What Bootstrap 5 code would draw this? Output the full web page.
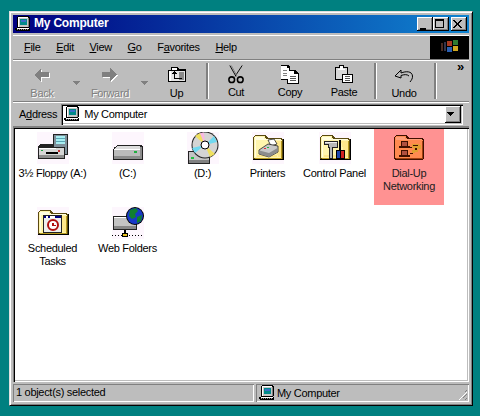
<!DOCTYPE html>
<html lang="en">
<head>
<meta charset="UTF-8">
<title>My Computer</title>
<link href="https://cdn.jsdelivr.net/npm/bootstrap@5.3.0/dist/css/bootstrap.min.css" rel="stylesheet">
<style>
html, body { height: 100%; }
body { background: #008080; font: 11px/13px "Liberation Sans", Arial, sans-serif; letter-spacing: -.3px; color: #000; padding: 11px 7px 0 9px; overflow: hidden; }
.win { width: 464px; height: 395px; background: #bdbdbd; border: 1px solid #000; border-top-color: #dfdfdf; border-left-color: #dfdfdf; box-shadow: inset 1px 1px #fff, inset -1px -1px #808080; padding: 3px; }
.titlebar { height: 18px; margin-bottom: 2px; background: linear-gradient(90deg, #000080, #1084d0); color: #fff; font-weight: 700; font-size: 12px; letter-spacing: -.2px; padding: 0 2px 0 2px; }
.titlebar svg { margin-right: 3px; }
.capbtn { width: 16px; height: 14px; background: #bdbdbd; box-shadow: inset -1px -1px #000, inset 1px 1px #fff, inset -2px -2px #808080; }
.capgap { margin-left: 2px; }
.band { border-top: 1px solid #fff; border-bottom: 1px solid #808080; }
.menubar { height: 25px; padding-left: 11px; gap: 15.6px; }
.flagbox { width: 39px; height: 23px; background: #000; }
.toolbar { height: 42px; position: relative; }
.tbtn { height: 40px; color: #000; padding-top: 6px; }
.tbtn svg { display: block; }
.tbtn .lbl { margin-top: 4px; }
.tbtn.tall { margin-top: -2px; }
.tbtn.tall .lbl { margin-top: 2px; }
.tbtn.off { color: #808080; text-shadow: 1px 1px 0 #fff; }
.w-back { width: 56px; margin-left: 1px; }
.w-drop { width: 12px; padding-top: 20px; }
.w-fwd { width: 56px; }
.w-up { width: 53px; }
.w-std { width: 54px; }
.sep { width: 2px; height: 36px; margin: 2px 1px 0 3px; background: #808080; box-shadow: 1px 0 #fff; }
.w-chev { font-weight: 700; font-size: 13px; line-height: 10px; padding: 1px 0 0 20px; }
.addrbar { height: 25px; padding: 1px 6px 1px 6px; }
.addrfield { flex: 1; height: 21px; margin-left: 4px; background: #fff; box-shadow: inset 1px 1px #808080, inset 2px 2px #000, inset -1px -1px #fff, inset -2px -2px #bdbdbd; padding: 2px 2px 2px 3px; }
.addrfield svg { margin-right: 4px; }
.ddbtn { width: 16px; height: 17px; background: #bdbdbd; box-shadow: inset -1px -1px #000, inset 1px 1px #fff, inset -2px -2px #808080; }
.pane { height: 256px; background: #fff; box-shadow: inset 1px 1px #808080, inset 2px 2px #000, inset -1px -1px #fff, inset -2px -2px #bdbdbd; padding: 2px 0 0 2px; }
.icongrid { width: 440px; }
.itm { height: 75px; padding-top: 3px; text-align: center; }
.itm svg { display: block; margin: 0 auto 3px; background: #fdf6fd; }
.c1 { width: 75px; }
.c2 { width: 75px; }
.c3 { width: 75px; }
.c4 { width: 55px; }
.c5 { width: 79px; }
.c6 { width: 70px; }
.itm.sel { background: #ff9292; color: #202020; height: 76px; margin-bottom: -1px; }
.itm.sel svg { background: #ff9292; }
.brk { flex-basis: 100%; height: 0; }
.statusbar { height: 18px; margin-top: 2px; gap: 2px; }
.cell { height: 18px; box-shadow: inset 1px 1px #808080, inset -1px -1px #fff; padding: 2px 3px; }
.cell1 { width: 241px; }
.cell2 { flex: 1; position: relative; padding-left: 3px; }
.cell2 svg.pc { margin-right: 2px; }
.grip { position: absolute; right: 1px; bottom: 1px; }
</style>
</head>
<body>
<svg width="0" height="0" class="position-absolute">
  <defs>
    <symbol id="pc" viewBox="0 0 16 16" shape-rendering="crispEdges">
      <path fill="#000" d="M3 0h11v1h1v10h-1v1h1v3H1v-1H0v-2h2V1h1z"/>
      <path fill="#c6c6c6" d="M3 1h10v10H3z"/>
      <path fill="#fff" d="M3 1h10v1H4v9H3z"/>
      <path fill="#008a8a" d="M5 3h7v6H5z"/>
      <path fill="#3a6ec8" d="M6 4h5v2H6z"/>
      <path fill="#808080" d="M13 2h1v9h-1z"/>
      <path fill="#fff" d="M2 12h12v1H2z"/>
      <path fill="#8a8a8a" d="M2 13h1v1H2zM4 13h1v1H4zM6 13h1v1H6zM8 13h1v1H8zM10 13h1v1h-1zM12 13h1v1h-1z"/>
    </symbol>
    <symbol id="folder" viewBox="0 0 32 32" shape-rendering="crispEdges">
      <path fill="#5a4a10" d="M3 3h11v1h1v1h1v1h14v1h1v20h-1v1H2v-1H1V5h1V4h1z"/>
      <path fill="#000" d="M1 27h31v1H1zM31 7h1v20h-1z"/>
      <path fill="#fff5ad" d="M3 4h10v2h1v1h15v1h1v18H2V5h1z"/>
      <path fill="#fffde0" d="M3 5h9v2H3zM3 7h26v1H3zM3 8h1v17H3z"/>
      <path fill="#b89a20" d="M29 9h1v18H3v-1h26z"/>
      <path fill="#ffe88c" d="M22 9h7v16h-3zM5 23h20v2H5z"/>
    </symbol>
  </defs>
</svg>
<div class="win d-flex flex-column">
  <div class="titlebar d-flex align-items-center">
    <svg width="16" height="16"><use href="#pc"/></svg>
    <span class="flex-grow-1">My Computer</span>
    <div class="capbtn d-flex align-items-end justify-content-center"><svg width="8" height="6" shape-rendering="crispEdges"><path d="M1 1h6v2H1z" transform="translate(-1 2)"/></svg></div>
    <div class="capbtn d-flex align-items-center justify-content-center"><svg width="10" height="10" shape-rendering="crispEdges"><path fill-rule="evenodd" d="M0 0h9v9H0zM1 2v6h7V2z"/></svg></div>
    <div class="capbtn capgap d-flex align-items-center justify-content-center"><svg width="9" height="8" shape-rendering="crispEdges"><path d="M0 0h2v1h1v1h1v1h1V2h1V1h1V0h2v1H8v1H7v1H6v2h1v1h1v1h1v1H7V7H6V6H5V5H4v1H3v1H2v1H0V7h1V6h1V5h1V3H2V2H1V1H0z"/></svg></div>
  </div>

  <div class="band menubar d-flex align-items-center position-relative">
    <span><u>F</u>ile</span><span><u>E</u>dit</span><span><u>V</u>iew</span><span><u>G</u>o</span><span>F<u>a</u>vorites</span><span><u>H</u>elp</span>
    <div class="flagbox ms-auto d-flex align-items-center justify-content-center">
      <svg width="20" height="16" viewBox="0 0 20 16" shape-rendering="crispEdges">
        <path fill="#4a2a20" d="M1 4h2v8H1z"/><path fill="#33334a" d="M4 3h2v9H4z"/>
        <path fill="#a83a20" d="M7 2h5v5H7z"/><path fill="#2f7a30" d="M13 1h5v5h-5z"/>
        <path fill="#2a5fb0" d="M7 8h5v5H7z"/><path fill="#d0a820" d="M13 7h5v5h-5z"/>
      </svg>
    </div>
  </div>

  <div class="band toolbar d-flex">
    <div class="tbtn off w-back d-flex flex-column align-items-center">
      <svg width="18" height="16" viewBox="0 0 18 16" shape-rendering="crispEdges"><path fill="#fff" d="M9 2v4h8v5H9v4L2 9z"/><path fill="#808080" d="M8 1v4h8v5H8v4L1 8z"/></svg>
      <span class="lbl">Back</span>
    </div>
    <div class="tbtn w-drop d-flex justify-content-center"><svg width="7" height="5" shape-rendering="crispEdges"><path fill="#808080" d="M0 0h7v1H6v1H5v1H4v1H3V3H2V2H1V1H0z"/></svg></div>
    <div class="tbtn off w-fwd d-flex flex-column align-items-center">
      <svg width="18" height="16" viewBox="0 0 18 16" shape-rendering="crispEdges"><path fill="#fff" d="M10 2v4H2v5h8v4l7-6z"/><path fill="#808080" d="M9 1v4H1v5h8v4l7-6z"/></svg>
      <span class="lbl">Forward</span>
    </div>
    <div class="tbtn w-drop d-flex justify-content-center"><svg width="7" height="5" shape-rendering="crispEdges"><path fill="#808080" d="M0 0h7v1H6v1H5v1H4v1H3V3H2V2H1V1H0z"/></svg></div>
    <div class="tbtn w-up d-flex flex-column align-items-center">
      <svg width="20" height="16" viewBox="0 0 20 16" shape-rendering="crispEdges">
        <path fill="#000" d="M4 0h7v1h1v1h7v13H1V3h3z"/>
        <path fill="#e4e4e4" d="M2 4h16v10H2z"/><path fill="#fff" d="M5 1h5v2H5zM2 4h2v10H2z"/><path fill="#8a8a8a" d="M12 5h5v8h-5z"/>
        <path fill="#000" d="M7 4l3 3H8v4h7v1H7V7H4z"/>
      </svg>
      <span class="lbl">Up</span>
    </div>
    <div class="sep"></div>
    <div class="tbtn tall w-std d-flex flex-column align-items-center">
      <svg width="20" height="20" viewBox="0 0 20 20"><path fill="none" stroke="#000" d="M3.500.5l6.500 11.500M16.500.5L9 12"/><path fill="none" stroke="#808080" d="M5 .5l6 11"/><circle cx="5.500" cy="15.500" r="3" fill="none" stroke="#000" stroke-width="1.600"/><circle cx="14.500" cy="15.500" r="3" fill="none" stroke="#000" stroke-width="1.600"/></svg>
      <span class="lbl">Cut</span>
    </div>
    <div class="tbtn tall w-std d-flex flex-column align-items-center">
      <svg width="20" height="20" viewBox="0 0 20 20" shape-rendering="crispEdges">
        <path fill="#000" d="M0 0h8l2 2v3h5l4 4v11H7v-4H0z"/><path fill="#fff" d="M1 1h6v2h2v12H1z"/>
        <path fill="#808080" d="M3 5h4v1H3zM3 8h4v1H3zM3 11h4v1H3z"/><path fill="#fff" d="M8 6h6v3h4v10H8z"/>
        <path fill="#555" d="M10 10h6v1h-6zM10 12h6v1h-6zM10 14h6v1h-6zM10 16h6v1h-6z"/>
      </svg>
      <span class="lbl">Copy</span>
    </div>
    <div class="tbtn tall w-std d-flex flex-column align-items-center">
      <svg width="20" height="20" viewBox="0 0 20 20" shape-rendering="crispEdges">
        <path fill="#000" d="M5 0h5v2h4v7h5v10H8v-3H1V2h4z"/><path fill="#d8d8d8" d="M2 3h11v6H8v6H2z"/>
        <path fill="#fff" d="M6 1h3v3h2v1H4V4h2zM9 10h9v8H9z"/><path fill="#555" d="M11 12h5v1h-5zM11 14h5v1h-5zM11 16h5v1h-5z"/>
      </svg>
      <span class="lbl">Paste</span>
    </div>
    <div class="sep"></div>
    <div class="tbtn w-std d-flex flex-column align-items-center">
      <svg width="20" height="16" viewBox="0 0 20 16"><path fill="none" stroke="#000" d="M1 9l6-6v3c5-2 11-2 11.500 3 .2 2.500-1 4-2.500 6"/><path fill="none" stroke="#000" d="M1 9l6 2V8.500c3-1 6-1.500 8 .5"/></svg>
      <span class="lbl">Undo</span>
    </div>
    <div class="sep"></div>
    <div class="w-chev">»</div>
  </div>

  <div class="band addrbar d-flex align-items-center">
    <span>A<u>d</u>dress</span>
    <div class="addrfield d-flex align-items-center">
      <svg width="16" height="16"><use href="#pc"/></svg>
      <span class="flex-grow-1">My Computer</span>
      <div class="ddbtn d-flex align-items-center justify-content-center"><svg width="8" height="5" shape-rendering="crispEdges"><path d="M0 0h7v1H6v1H5v1H4v1H3V3H2V2H1V1H0z"/></svg></div>
    </div>
  </div>

  <div class="pane">
    <div class="icongrid d-flex flex-wrap">
      <div class="itm c1">
        <svg width="32" height="32" viewBox="0 0 32 32" shape-rendering="crispEdges">
          <path fill="#222" d="M16 2h15v21h-3v-8H1v-1l3-2h12z"/>
          <path fill="#7f8f9a" d="M17 3h13v19H17z"/><path fill="#a8eef2" d="M19 4h9v8h-9z"/><path fill="#5aa5b5" d="M19 6h9v1h-9zM19 9h9v1h-9z"/>
          <path fill="#d8d8d8" d="M20 15h8v7h-8z"/><path fill="#000" d="M24 16h2v4h-2z"/>
          <path fill="#222" d="M1 15h27v12H1z"/><path fill="#d6d6d6" d="M2 16h25v10H2z"/><path fill="#fff" d="M2 16h17v1H2z"/><path fill="#8c8c8c" d="M2 23h25v3H2z"/>
          <path fill="#000" d="M9 20h12v2H9z"/><path fill="#c03030" d="M21 18h2v2h-2z"/><path fill="#20a040" d="M4 18h2v1H4z"/>
        </svg>
        3½ Floppy (A:)
      </div>
      <div class="itm c2">
        <svg width="32" height="32" viewBox="0 0 32 32" shape-rendering="crispEdges">
          <path fill="#222" d="M5 13h25v1h1v14H1V17h1v-2h2v-1h1z"/>
          <path fill="#dcdcdc" d="M5 14h23v3H3z"/><path fill="#bcbcbc" d="M2 17h26v10H2z"/><path fill="#8c8c8c" d="M2 24h26v3H2zM28 15h2v12h-2z"/><path fill="#fff" d="M2 17h26v1H2z"/>
          <path fill="#20b040" d="M22 19h3v2h-3z"/>
        </svg>
        (C:)
      </div>
      <div class="itm c3">
        <svg width="32" height="32" viewBox="0 0 32 32">
          <path fill="#222" d="M1 19h22v13H1z"/><path fill="#c4c4c4" d="M2 20h20v11H2z"/><path fill="#808080" d="M2 28h20v3H2z"/><path fill="#20c040" d="M4 25h3v2H4z"/>
          <circle cx="18" cy="13" r="13.500" fill="#222"/><circle cx="18" cy="13" r="12.500" fill="#d4d4d4"/>
          <path fill="#f0e060" d="M18 13L8 4l5-3zM18 13l10 9-5 3z"/><path fill="#70d8f0" d="M18 13L27 4l3 6zM18 13l-10 8-3-5z"/><path fill="#f8b8e0" d="M18 13L13 1l4-.5z"/>
          <circle cx="18" cy="13" r="4" fill="#fff" stroke="#000"/>
        </svg>
        (D:)
      </div>
      <div class="itm c4">
        <svg width="32" height="32" viewBox="0 0 32 32">
          <use href="#folder"/>
          <path fill="#fff" stroke="#222" stroke-width=".8" d="M16 8l6-1 3 5-6 2z"/>
          <path fill="#c8c8c8" stroke="#222" stroke-width=".8" d="M7 18l9-6 10 2v6l-9 5-10-3z"/>
          <path fill="#8c8c8c" d="M7.500 18.500l9.500 2.500 8.500-5v4l-8.500 5-9.500-3z"/>
          <path fill="#e03030" d="M12 16h2v1h-2z"/><path fill="#20b040" d="M15 15h2v1h-2z"/>
        </svg>
        Printers
      </div>
      <div class="itm c5">
        <svg width="32" height="32" viewBox="0 0 32 32" shape-rendering="crispEdges">
          <use href="#folder"/>
          <path fill="#222" d="M5 9h14v7h-5v11h-4V16H9v-3H5z"/><path fill="#b8b8b8" d="M6 10h12v5h-5v11h-2V15H10v-3H6z"/><path fill="#eee" d="M6 10h12v1H6z"/>
          <path fill="#000" d="M20 8h2v10h4v9h-9v-9h3z"/><path fill="#e8e8e8" d="M21 9h0v9h0z"/>
          <path fill="#2048b0" d="M18 19h3v7h-3z"/><path fill="#d02020" d="M22 19h3v7h-3z"/>
        </svg>
        Control Panel
      </div>
      <div class="itm c6 sel">
        <svg width="32" height="32" viewBox="0 0 32 32" shape-rendering="crispEdges">
          <path fill="#401000" d="M3 3h11v1h1v1h1v1h14v1h1v20h-1v1H2v-1H1V5h1V4h1z"/>
          <path fill="#ff8a50" d="M3 4h10v2h1v1h15v1h1v18H2V5h1z"/><path fill="#ff9f78" d="M3 5h9v2H3zM3 7h26v1H3z"/><path fill="#a04010" d="M29 9h1v18H3v-1h26z"/>
          <path fill="#401000" d="M8 9h7v5h2v2H6v-2h2zM8 18h7v5h2v2H6v-2h2z"/><path fill="#b05040" d="M9 10h5v4H9zM9 19h5v4H9z"/>
          <path fill="none" stroke="#401000" d="M17 15.500h3M17 21.500h3"/><path fill="#e0a030" d="M19 12h7v1h2v4h-3v3h-3v1h-3v-3h2v-2h-2z"/><path fill="#401000" d="M20 13h5v1h-5zM22 16h2v2h-2z"/>
        </svg>
        Dial-Up<br>Networking
      </div>
      <div class="brk"></div>
      <div class="itm c1">
        <svg width="32" height="32" viewBox="0 0 32 32">
          <use href="#folder"/>
          <g shape-rendering="crispEdges">
            <path fill="#222" d="M6 8h19v18H6z"/><path fill="#eee" d="M7 9h17v16H7z"/><path fill="#000080" d="M7 9h17v2H7z"/><path fill="#fff" d="M9 9h2v2H9zM13 9h5v2h-5z"/>
          </g>
          <circle cx="16" cy="18" r="5" fill="#fff" stroke="#b01010" stroke-width="2"/>
          <path fill="#b01010" d="M15 16h2v2h2v1h-4z"/>
        </svg>
        Scheduled<br>Tasks
      </div>
      <div class="itm c2">
        <svg width="32" height="32" viewBox="0 0 32 32">
          <g shape-rendering="crispEdges">
            <path fill="#222" d="M1 9h24v14H1z"/><path fill="#c4c4c4" d="M2 10h22v12H2z"/><path fill="#fff" d="M2 10h22v1H2z"/><path fill="#888" d="M2 19h22v3H2z"/>
            <path fill="#000" d="M12 23h2v4h-2z"/><path fill="#e8c020" stroke="#000" d="M10.500 26.500h5v3h-5z"/>
            <path fill="#000" d="M0 28h1v1H0zM3 28h1v1H3zM6 28h1v1H6zM9 28h1v1H9zM17 28h1v1h-1zM20 28h1v1h-1zM23 28h1v1h-1zM26 28h1v1h-1zM29 28h1v1h-1z"/>
          </g>
          <circle cx="23" cy="9" r="9" fill="#000"/><circle cx="23" cy="9" r="8" fill="#1838c8"/>
          <path fill="#108030" d="M18 3l6-2 2 3-3 3 1 3-4 2-3-3zM25 10l5-2-1 6-4 2z"/>
        </svg>
        Web Folders
      </div>
    </div>
  </div>

  <div class="statusbar d-flex">
    <div class="cell cell1">1 object(s) selected</div>
    <div class="cell cell2 d-flex align-items-center">
      <svg class="pc" width="16" height="16"><use href="#pc"/></svg>
      My Computer
      <svg class="grip" width="12" height="12" shape-rendering="crispEdges"><path fill="#808080" d="M11 0v2h-1v1H9V2h1V1h1zM11 4v2h-1v1H9v1H8v1H7V8h1V7h1V6h1V5h1zM11 8v2h-1v1H9v-1h1V9h1z"/><path fill="#fff" d="M11 3h-1v1H9v1H8v1H7v1H6v1H5v1H4v1H3v1h1v-1h1V9h1V8h1V7h1V6h1V5h1V4h1z"/></svg>
    </div>
  </div>
</div>
<script src="https://cdn.jsdelivr.net/npm/bootstrap@5.3.0/dist/js/bootstrap.bundle.min.js"></script>
</body>
</html>
